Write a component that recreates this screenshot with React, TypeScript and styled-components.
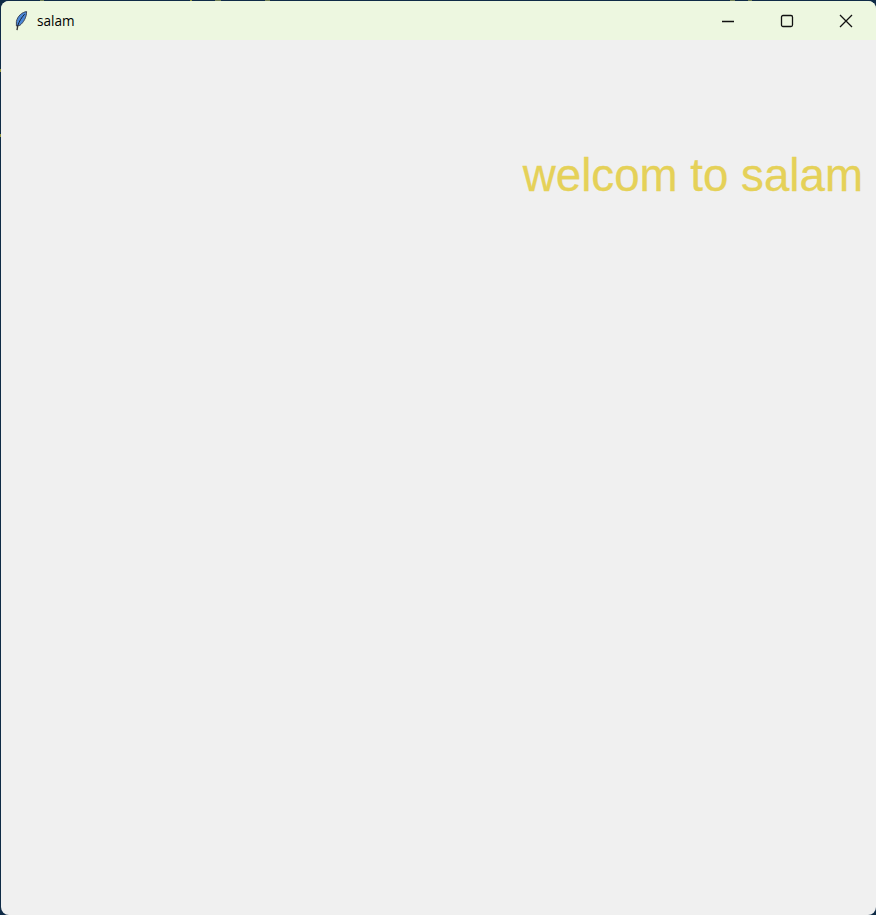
import React from "react";
import styled, { createGlobalStyle } from "styled-components";

const GlobalStyle = createGlobalStyle`
  html, body {
    margin: 0;
    padding: 0;
    width: 876px;
    height: 915px;
    overflow: hidden;
    background: #0f2b46;
  }
`;

// wallpaper peeking through along the top and left edge of the window
const Desktop = styled.div`
  width: 876px;
  height: 915px;
  padding: 1px 0 0 1px;
  box-sizing: border-box;
  background:
    linear-gradient(#8f9440, #8f9440) 190px 0 / 2px 1px no-repeat,
    linear-gradient(#6f7f55, #6f7f55) 40px 0 / 4px 1px no-repeat,
    linear-gradient(#6f7f55, #6f7f55) 215px 0 / 6px 1px no-repeat,
    linear-gradient(#6f7f55, #6f7f55) 265px 0 / 5px 1px no-repeat,
    linear-gradient(#6f7f55, #6f7f55) 730px 0 / 5px 1px no-repeat,
    linear-gradient(#6f7f55, #6f7f55) 748px 0 / 4px 1px no-repeat,
    linear-gradient(#8f9440, #8f9440) 0 69px / 1px 3px no-repeat,
    linear-gradient(#8f9440, #8f9440) 0 134px / 1px 3px no-repeat,
    #0f2b46;
`;

const WindowFrame = styled.div`
  width: 875px;
  height: 914px;
  display: flex;
  flex-direction: column;
  border-radius: 8px;
  overflow: hidden;
  background: #f0f0f0;
`;

const TitleBar = styled.div`
  height: 39px;
  flex: none;
  display: flex;
  align-items: center;
  background: #edf7e0;
`;

const AppIcon = styled.svg`
  width: 16px;
  height: 20px;
  margin-left: 12px;
  flex: none;
`;

const TitleText = styled.span`
  margin-left: 8px;
  font-family: "Open Sans", "Liberation Sans", sans-serif;
  font-size: 13.6px;
  color: #000;
`;

const CaptionButtons = styled.div`
  margin-left: auto;
  margin-right: 1px;
  display: flex;
  height: 100%;
`;

const CaptionButton = styled.div`
  width: 59px;
  display: flex;
  align-items: center;
  justify-content: center;

  & svg {
    width: 14px;
    height: 14px;
    stroke: #111;
    stroke-width: 1.3;
    fill: none;
  }
`;

const Content = styled.div`
  flex: 1;
  display: flex;
  flex-direction: column;
  align-items: flex-end;
  padding: 110px 13px 0 0;
`;

const Welcome = styled.div`
  font-family: "Liberation Sans", Arial, sans-serif;
  font-size: 45.7px;
  line-height: 52px;
  color: #e5d158;
  -webkit-text-stroke: 0.3px #e5d158;
`;

const Feather = () => (
  <AppIcon viewBox="0 0 16 20">
    <path d="M13.6 0.6 C9 1.2 4.6 5 3.4 10.5 L3.4 15 L6.8 14.4 C10.4 11.6 13.6 6.5 13.6 0.6 Z" fill="#4a86d6" stroke="#3c4658" strokeWidth="1" />
    <path d="M11.6 3.2 C8.6 6.4 6 10.5 4.6 15" stroke="#14233a" strokeWidth="1" fill="none" />
    <path d="M4.8 14.5 L4 19.2" stroke="#333" strokeWidth="1.4" fill="none" />
  </AppIcon>
);

export default function App() {
  return (
    <Desktop>
      <GlobalStyle />
      <WindowFrame>
        <TitleBar>
          <Feather />
          <TitleText>salam</TitleText>
          <CaptionButtons>
            <CaptionButton>
              <svg viewBox="0 0 14 14">
                <line x1="1" y1="7.5" x2="13" y2="7.5" />
              </svg>
            </CaptionButton>
            <CaptionButton>
              <svg viewBox="0 0 14 14">
                <rect x="1.5" y="1.5" width="11" height="11" rx="1.5" />
              </svg>
            </CaptionButton>
            <CaptionButton>
              <svg viewBox="0 0 14 14">
                <path d="M1 1 L13 13 M13 1 L1 13" />
              </svg>
            </CaptionButton>
          </CaptionButtons>
        </TitleBar>
        <Content>
          <Welcome>welcom to salam</Welcome>
        </Content>
      </WindowFrame>
    </Desktop>
  );
}
